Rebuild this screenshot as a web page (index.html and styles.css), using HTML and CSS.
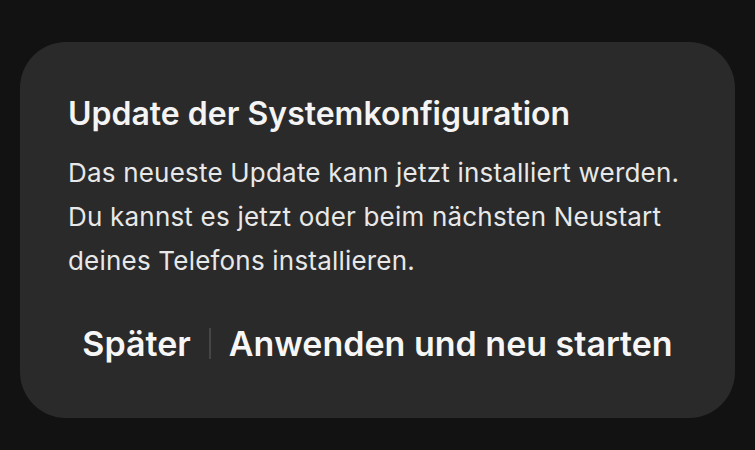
FILE: index.html
```html
<!DOCTYPE html>
<html lang="de">
<head>
  <meta charset="UTF-8" />
  <meta name="viewport" content="width=device-width, initial-scale=1.0"/>
  <title>Systemupdate</title>
  <link rel="stylesheet" href="styles.css">
</head>
<body>

  <div class="dialog">
    <h1 class="dialog-title">Update der Systemkonfiguration</h1>
    <p class="dialog-text">
      Das neueste Update kann jetzt installiert werden.<br/>
      Du kannst es jetzt oder beim nächsten Neustart<br/>
      deines Telefons installieren.
    </p>

    <div class="actions">
      <button class="action">Später</button>
      <span class="divider"></span>
      <button class="action">Anwenden und neu starten</button>
    </div>
  </div>

</body>
</html>
```

FILE: styles.css
```css
body {
  margin: 0;
  font-family: 'Inter', 'Noto Sans', sans-serif;
  background: #121212;
  color: #f2f2f2;
}

.dialog {
  box-sizing: border-box;
  width: 715px;
  height: 376px;
  margin: 42px 20px;
  padding: 48px 48px 0;
  border-radius: 46px;
  background: #2a2a2a;
}

.dialog-title {
  margin: 0;
  font-size: 32px;
  font-weight: 600;
  line-height: 48px;
  color: #f4f4f4;
}

.dialog-text {
  margin: 13px 0 0;
  font-size: 26px;
  font-weight: 400;
  line-height: 44px;
  letter-spacing: 0.2px;
  color: #e8e8e8;
}

.actions {
  display: flex;
  justify-content: center;
  align-items: center;
  margin-top: 40px;
  gap: 18px;
}

.action {
  padding: 0;
  border: none;
  background: none;
  font-family: inherit;
  font-size: 34px;
  font-weight: 600;
  color: #f6f6f6;
  cursor: pointer;
}

.divider {
  width: 2px;
  height: 31px;
  background: #454545;
}
```
